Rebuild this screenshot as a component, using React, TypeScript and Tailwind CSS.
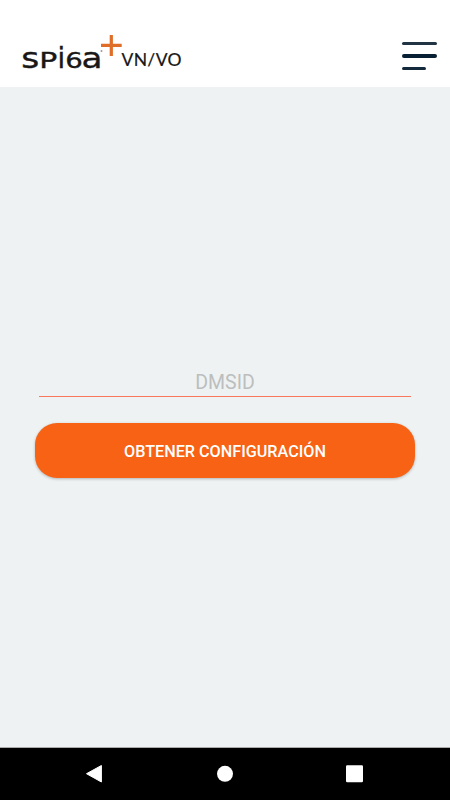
function Logo() {
  return (
    <svg
      className="h-[52px] w-[168px] overflow-visible font-['DejaVu_Sans',sans-serif]"
      viewBox="20 32 168 52"
      role="img"
      aria-label="Spiga+ VN/VO"
    >
      <g fill="#191717" stroke="#191717" strokeWidth="0.35">
        <text x="21.3" y="67.8" fontSize="27.5" textLength="18" lengthAdjust="spacingAndGlyphs">s</text>
        <text x="39.2" y="67.8" fontSize="21" textLength="18" lengthAdjust="spacingAndGlyphs">P</text>
        <text x="57.5" y="67.8" fontSize="27.5">i</text>
        <text x="65.3" y="67.8" fontSize="20.5" textLength="17.5" lengthAdjust="spacingAndGlyphs">6</text>
        <text x="81.5" y="67.8" fontSize="27.5" textLength="21" lengthAdjust="spacingAndGlyphs">a</text>
        <circle cx="101.5" cy="51" r="1" fill="#999" stroke="none" />
        <text x="121.5" y="65.8" fontSize="17.5" textLength="60" strokeWidth="0.2" className="font-[Lato,sans-serif]">
          VN/VO
        </text>
      </g>
      <path d="M111.3 35v21M101 45.3h20.7" stroke="#df6e28" strokeWidth="3.2" fill="none" />
    </svg>
  );
}

function MenuIcon() {
  return (
    <div className="flex w-[35px] flex-col gap-[9px]">
      <span className="h-[3.4px] rounded-full bg-[#203443]" />
      <span className="h-[3.4px] rounded-full bg-[#082033]" />
      <span className="h-[3.4px] w-6 rounded-full bg-[#132a3c]" />
    </div>
  );
}

export default function App() {
  return (
    <div className="flex h-[800px] w-[450px] flex-col bg-[#eef2f3] font-[Roboto,sans-serif]">
      <header className="flex h-[87px] items-start justify-between bg-white pt-8 pr-[13px] pl-5">
        <Logo />
        <button aria-label="Menu" className="pt-[10px]">
          <MenuIcon />
        </button>
      </header>
      <main className="flex flex-1 flex-col px-[35px] pt-[280px]">
        <input
          placeholder="DMSID"
          className="mx-1 h-[30px] border-b border-[#f8775d] pt-[2px] text-center text-[19.5px] leading-7 outline-none placeholder:text-[#bcbebe]"
        />
        <button className="mt-[26px] h-[55px] rounded-[22px] bg-[#f76214] pt-[3px] text-[16.2px] font-medium text-white shadow-[0_1px_3px_rgba(0,0,0,0.25)]">
          OBTENER CONFIGURACIÓN
        </button>
      </main>
      <nav className="h-[53px] border-t border-[#aaa] bg-black">
        <svg className="h-[52px] w-[450px]" viewBox="0 748 450 52" fill="white">
          <path d="M86.5 773.7L101.4 765.5V782Z" stroke="white" strokeLinejoin="round" />
          <circle cx="225" cy="773.8" r="8" />
          <rect x="346" y="765.2" width="17" height="17" rx="1.2" />
        </svg>
      </nav>
    </div>
  );
}
